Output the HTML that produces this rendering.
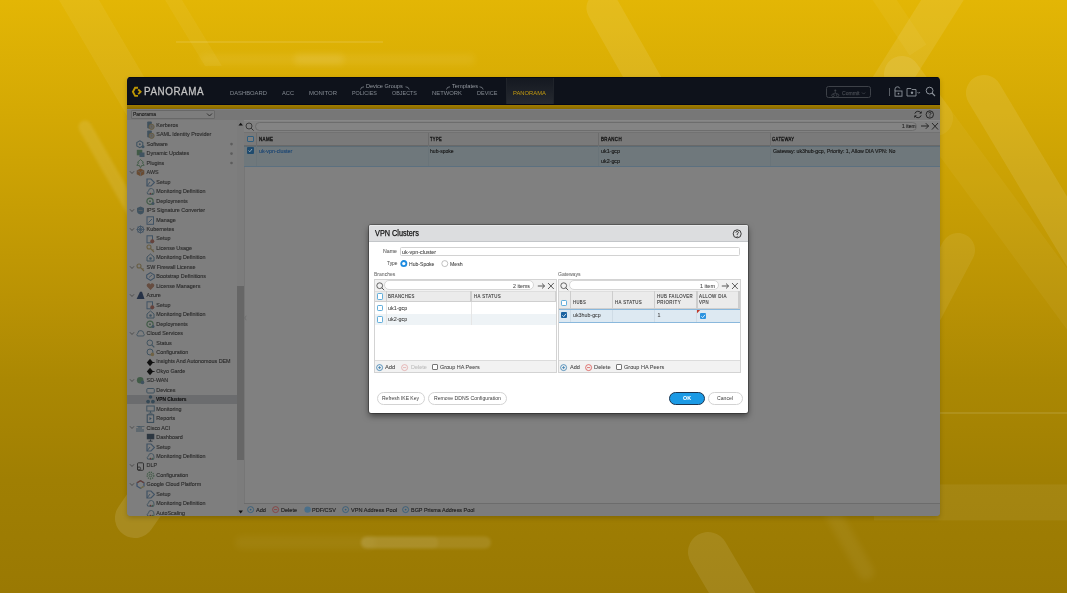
<!DOCTYPE html>
<html><head><meta charset="utf-8"><style>
*{margin:0;padding:0;box-sizing:border-box}
html,body{width:1067px;height:593px;overflow:hidden}
body{position:relative;font-family:"Liberation Sans",sans-serif;background:linear-gradient(180deg,#e3b605 0%,#d4a904 19%,#b99204 51%,#ab8803 64%,#a07f03 81%,#9a7903 100%)}
.a{position:absolute}
.t{position:absolute;white-space:nowrap;line-height:1;-webkit-text-stroke-width:0.15px}
body>div{will-change:transform}
</style></head>
<body>
<svg class="a" style="left:0;top:0" width="1067" height="593" viewBox="0 0 1067 593">
<defs><filter id="bl" x="-50%" y="-50%" width="200%" height="200%"><feGaussianBlur stdDeviation="3"/></filter><filter id="bl2" x="-50%" y="-50%" width="200%" height="200%"><feGaussianBlur stdDeviation="1.5"/></filter></defs>
<polygon points="59,0 99,0 190,155 150,155" fill="#fff" opacity="0.06"/>
<polygon points="165,0 182,0 222,66 205,66" fill="#fff" opacity="0.05"/>
<rect x="176" y="41.5" width="207" height="1" fill="#fff" opacity="0.2"/>
<rect x="200" y="54" width="275" height="11" rx="5" fill="#fff" opacity="0.06" filter="url(#bl)"/>
<rect x="294" y="54" width="50" height="11" rx="5" fill="#fff" opacity="0.09" filter="url(#bl)"/>
<line x1="85" y1="127" x2="145" y2="232" stroke="#fff" stroke-width="13" stroke-linecap="round" opacity="0.1" filter="url(#bl2)"/>
<line x1="603" y1="8" x2="658" y2="105" stroke="#fff" stroke-width="33" stroke-linecap="round" opacity="0.09"/>
<line x1="955" y1="-20" x2="867" y2="120" stroke="#fff" stroke-width="36" stroke-linecap="butt" opacity="0.09"/>
<line x1="902" y1="74" x2="935" y2="118" stroke="#fff" stroke-width="36" stroke-linecap="round" opacity="0.05"/><line x1="902" y1="74" x2="1130" y2="385" stroke="#fff" stroke-width="36" stroke-linecap="round" opacity="0.04"/>
<line x1="878" y1="-10" x2="918" y2="50" stroke="#fff" stroke-width="20" opacity="0.04"/>
<line x1="984" y1="93" x2="1120" y2="320" stroke="#fff" stroke-width="36" stroke-linecap="round" opacity="0.09"/>
<line x1="958" y1="250" x2="900" y2="360" stroke="#fff" stroke-width="34" stroke-linecap="round" opacity="0.07"/>
<rect x="930" y="412.5" width="137" height="1" fill="#fff" opacity="0.2"/>
<rect x="874" y="484.4" width="193" height="36" fill="#fff" opacity="0.06"/>
<line x1="708" y1="552" x2="760" y2="640" stroke="#fff" stroke-width="40" stroke-linecap="round" opacity="0.09"/>
<line x1="828" y1="505" x2="866" y2="572" stroke="#fff" stroke-width="16" stroke-linecap="round" opacity="0.05" filter="url(#bl)"/>
<line x1="135" y1="518" x2="190" y2="438" stroke="#fff" stroke-width="40" stroke-linecap="round" opacity="0.11"/>
<rect x="235" y="536" width="140" height="13" rx="6" fill="#fff" opacity="0.04" filter="url(#bl)"/>
<rect x="361" y="536.5" width="130" height="12" rx="6" fill="#fff" opacity="0.1" filter="url(#bl2)"/>
<rect x="361" y="536.5" width="77" height="12" rx="5" fill="#fff" opacity="0.05" filter="url(#bl2)"/>
</svg>
<div class="a" id="ui" style="left:0;top:0;width:1067px;height:593px">
<div class="a" style="left:127px;top:77px;width:813px;height:439px;border-radius:4px;overflow:hidden;background:#808080;box-shadow:0 2px 5px rgba(0,0,0,0.18)">
<div class="a" style="left:-127px;top:-77px;width:1067px;height:593px">
<div class="a" style="left:127px;top:77px;width:813px;height:28px;background:#0e121b;"></div>
<div class="a" style="left:506px;top:77px;width:48px;height:28px;background:linear-gradient(180deg,#141820 0%,#262a31 100%);border-left:1px solid #1f232a;border-right:1px solid #1f232a"></div>
<div class="a" style="left:127px;top:104px;width:813px;height:1.2px;background:#04061a;"></div>
<div class="a" style="left:127px;top:77px;width:813px;height:1px;background:#080b12;"></div>
<div class="a" style="left:127px;top:105.2px;width:813px;height:3.8px;background:linear-gradient(180deg,#9f7c00,#8a6a00);"></div>
<div class="a" style="left:127px;top:109px;width:813px;height:1px;background:#7a7e88;"></div>
<svg class="a" style="left:131px;top:86px;" width="12" height="12" viewBox="0 0 12 12"><path d="M7 1.7 H4.1 L1.9 5.8 L4.1 9.9 H7" fill="none" stroke="#bd9604" stroke-width="1.9"/><path d="M7.2 3.4 L9.6 5.8 L7.2 8.2" fill="none" stroke="#bd9604" stroke-width="1.9"/></svg>
<div class="t" style="left:144.00px;top:86.12px;font-size:10.6px;color:#c2c2c2;letter-spacing:0.6px;transform:scaleX(0.9307);transform-origin:0 0;-webkit-text-stroke:0.3px #c2c2c2;">PANORAMA</div>
<div class="t" style="left:230.00px;top:89.75px;font-size:6.2px;color:#858b93;transform:scaleX(0.9421);transform-origin:0 0;-webkit-text-stroke-width:0;">DASHBOARD</div>
<div class="t" style="left:282.00px;top:89.75px;font-size:6.2px;color:#858b93;transform:scaleX(0.9167);transform-origin:0 0;-webkit-text-stroke-width:0;">ACC</div>
<div class="t" style="left:309.00px;top:89.75px;font-size:6.2px;color:#858b93;transform:scaleX(0.9601);transform-origin:0 0;-webkit-text-stroke-width:0;">MONITOR</div>
<div class="t" style="left:352.00px;top:89.75px;font-size:6.2px;color:#858b93;transform:scaleX(0.8741);transform-origin:0 0;-webkit-text-stroke-width:0;">POLICIES</div>
<div class="t" style="left:392.00px;top:89.75px;font-size:6.2px;color:#858b93;transform:scaleX(0.8743);transform-origin:0 0;-webkit-text-stroke-width:0;">OBJECTS</div>
<div class="t" style="left:432.00px;top:89.75px;font-size:6.2px;color:#858b93;transform:scaleX(0.9468);transform-origin:0 0;-webkit-text-stroke-width:0;">NETWORK</div>
<div class="t" style="left:477.00px;top:89.75px;font-size:6.2px;color:#858b93;transform:scaleX(0.8881);transform-origin:0 0;-webkit-text-stroke-width:0;">DEVICE</div>
<div class="t" style="left:513.00px;top:89.75px;font-size:6.2px;color:#c39a10;transform:scaleX(0.9422);transform-origin:0 0;-webkit-text-stroke-width:0;">PANORAMA</div>
<div class="t" style="left:366.00px;top:83.22px;font-size:6.0px;color:#959aa1;transform:scaleX(0.9248);transform-origin:0 0;-webkit-text-stroke-width:0;">Device Groups</div>
<div class="t" style="left:451.70px;top:83.22px;font-size:6.0px;color:#959aa1;transform:scaleX(0.9508);transform-origin:0 0;-webkit-text-stroke-width:0;">Templates</div>
<svg class="a" style="left:360px;top:85.5px;" width="5" height="4" viewBox="0 0 5 4"><path d="M0.5 3.5 Q0.8 0.8 4 0.8" fill="none" stroke="#8d939b" stroke-width="0.7"/></svg>
<svg class="a" style="left:405px;top:85.5px;" width="5" height="4" viewBox="0 0 5 4"><path d="M0.5 0.8 Q3.8 0.8 4.2 3.5" fill="none" stroke="#8d939b" stroke-width="0.7"/></svg>
<svg class="a" style="left:446px;top:85.5px;" width="5" height="4" viewBox="0 0 5 4"><path d="M0.5 3.5 Q0.8 0.8 4 0.8" fill="none" stroke="#8d939b" stroke-width="0.7"/></svg>
<svg class="a" style="left:479px;top:85.5px;" width="5" height="4" viewBox="0 0 5 4"><path d="M0.5 0.8 Q3.8 0.8 4.2 3.5" fill="none" stroke="#8d939b" stroke-width="0.7"/></svg>
<div class="a" style="left:826.2px;top:86.2px;width:45px;height:11.8px;border:1.3px solid #3d4148;border-radius:2.5px"></div>
<svg class="a" style="left:831px;top:88.5px;" width="9" height="9" viewBox="0 0 9 9"><circle cx="4.3" cy="1.6" r="1" fill="#41454c"/><circle cx="2" cy="6.3" r="1.3" fill="none" stroke="#41454c" stroke-width="0.8"/><circle cx="6.6" cy="6.3" r="1.3" fill="none" stroke="#41454c" stroke-width="0.8"/><path d="M4.3 2.5 V4.5 M2 5 L4.3 4 L6.6 5" stroke="#41454c" stroke-width="0.7" fill="none"/></svg>
<div class="t" style="left:841.60px;top:89.72px;font-size:6.0px;color:#43474e;transform:scaleX(0.8420);transform-origin:0 0;-webkit-text-stroke-width:0.25px;">Commit</div>
<svg class="a" style="left:860.5px;top:91.1px;" width="6" height="5" viewBox="0 0 6 5"><path d="M1 1.5 L2.6 3.1 L4.2 1.5" stroke="#43474e" stroke-width="0.8" fill="none"/></svg>
<div class="a" style="left:888.5px;top:88px;width:1px;height:8px;background:#5a5f66;"></div>
<svg class="a" style="left:893px;top:86px;" width="10" height="11" viewBox="0 0 10 11"><path d="M2 5 V3 Q2 0.8 4.5 0.8 Q6.5 0.8 6.8 2.5" stroke="#8d939b" stroke-width="0.9" fill="none"/><rect x="2" y="5" width="7" height="5.2" stroke="#8d939b" stroke-width="0.9" fill="none"/><circle cx="5.5" cy="7.6" r="0.9" fill="#8d939b"/></svg>
<svg class="a" style="left:906px;top:86px;" width="15" height="11" viewBox="0 0 15 11"><path d="M1 2.5 H5 L6 3.5 H10 V10 H1 Z" stroke="#8d939b" stroke-width="0.9" fill="none"/><circle cx="6" cy="6.8" r="1.2" fill="#8d939b"/><path d="M11.5 6 L12.8 7.3 L14.1 6" stroke="#8d939b" stroke-width="0.8" fill="none"/></svg>
<svg class="a" style="left:925px;top:86px;" width="11" height="11" viewBox="0 0 11 11"><circle cx="4.6" cy="4.6" r="3.4" stroke="#8d939b" stroke-width="1" fill="none"/><path d="M7 7 L10 10" stroke="#8d939b" stroke-width="1.1"/></svg>
<div class="a" style="left:127px;top:110px;width:813px;height:10px;background:#777777;"></div>
<div class="a" style="left:130.5px;top:109.7px;width:84px;height:9.3px;background:#7d7d7d;border:1px solid #686868;border-radius:1px"></div>
<div class="t" style="left:133.00px;top:111.93px;font-size:5.4px;color:#1c1c1c;transform:scaleX(0.9232);transform-origin:0 0;">Panorama</div>
<svg class="a" style="left:205.5px;top:111.5px;" width="7" height="6" viewBox="0 0 7 6"><path d="M1 1.5 L3.5 4 L6 1.5" stroke="#2a2a2a" stroke-width="0.9" fill="none"/></svg>
<svg class="a" style="left:913px;top:109.5px;" width="10" height="9" viewBox="0 0 10 9"><path d="M1.8 3.6 A3.4 3.4 0 0 1 8 3" stroke="#1e1e1e" stroke-width="0.9" fill="none"/><path d="M8.2 5.4 A3.4 3.4 0 0 1 2 6" stroke="#1e1e1e" stroke-width="0.9" fill="none"/><path d="M6.5 3.2 H8.3 V1.4" stroke="#1e1e1e" stroke-width="0.9" fill="none"/><path d="M3.5 5.8 H1.7 V7.6" stroke="#1e1e1e" stroke-width="0.9" fill="none"/></svg>
<svg class="a" style="left:925px;top:109.5px;" width="10" height="9" viewBox="0 0 10 9"><circle cx="4.8" cy="4.5" r="3.7" stroke="#1e1e1e" stroke-width="0.9" fill="none"/><path d="M3.6 3.3 Q3.8 2.2 4.9 2.2 Q6 2.3 6 3.3 Q5.9 4.1 4.9 4.6 V5.5" stroke="#1e1e1e" stroke-width="0.8" fill="none"/><circle cx="4.9" cy="6.8" r="0.5" fill="#1e1e1e"/></svg>
<div class="a" style="left:127px;top:120px;width:117px;height:396px;background:#7e7e7e;"></div>
<div class="a" style="left:236.5px;top:120px;width:7.5px;height:396px;background:#7c7c7c;"></div>
<div class="a" style="left:236.8px;top:286px;width:7px;height:173.5px;background:#666666;"></div>
<div class="a" style="left:243.8px;top:120px;width:0.6px;height:396px;background:#767676;"></div>
<svg class="a" style="left:237.5px;top:122px;" width="6" height="4" viewBox="0 0 6 4"><path d="M0.5 3.6 L2.7 0.8 L4.9 3.6 Z" fill="#111"/></svg>
<svg class="a" style="left:237.5px;top:510px;" width="6" height="4" viewBox="0 0 6 4"><path d="M0.5 0.6 L2.7 3.4 L4.9 0.6 Z" fill="#111"/></svg>
<div class="a" style="left:127px;top:395.1px;width:109.6px;height:8.8px;background:#6b6c6e;"></div>
<svg class="a" style="left:146px;top:121.0px;filter:saturate(.5) brightness(.8)" width="9" height="9" viewBox="0 0 9 9"><rect x="1.2" y="0.4" width="4.6" height="7" rx="0.8" fill="#3f6888"/><circle cx="5.6" cy="5.8" r="2.6" fill="#7e7e7e" stroke="#8d7434" stroke-width="1"/><path d="M5.6 4.8 V6.6" stroke="#8d7434" stroke-width="0.8"/></svg>
<div class="t" style="left:156.30px;top:122.93px;font-size:5.4px;color:#2b2b2b;-webkit-text-stroke-width:0.12px;">Kerberos</div>
<svg class="a" style="left:146px;top:130.46px;filter:saturate(.5) brightness(.8)" width="9" height="9" viewBox="0 0 9 9"><rect x="1.2" y="0.4" width="4.6" height="7" rx="0.8" fill="#3f6888"/><circle cx="5.6" cy="5.8" r="2.6" fill="#7e7e7e" stroke="#8d7434" stroke-width="1"/><path d="M5.6 4.8 V6.6" stroke="#8d7434" stroke-width="0.8"/></svg>
<div class="t" style="left:156.30px;top:132.39px;font-size:5.4px;color:#2b2b2b;-webkit-text-stroke-width:0.12px;">SAML Identity Provider</div>
<svg class="a" style="left:136px;top:139.92000000000002px;filter:saturate(.5) brightness(.8)" width="9" height="9" viewBox="0 0 9 9"><path d="M3.8 0.8 L6.8 2.5 V6 L3.8 7.7 L0.8 6 V2.5 Z" fill="none" stroke="#3d6b8c" stroke-width="1.1"/><circle cx="3.8" cy="4.2" r="1" fill="#3d6b8c"/><circle cx="7" cy="6.8" r="1.5" fill="#3d6b8c"/></svg>
<div class="t" style="left:146.60px;top:141.85px;font-size:5.4px;color:#2b2b2b;-webkit-text-stroke-width:0.12px;">Software</div>
<svg class="a" style="left:229px;top:142px;" width="5" height="5" viewBox="0 0 5 5"><circle cx="2.5" cy="2.12" r="1.3" fill="#5c5c5c"/></svg>
<svg class="a" style="left:136px;top:149.38000000000002px;filter:saturate(.5) brightness(.8)" width="9" height="9" viewBox="0 0 9 9"><rect x="0.8" y="0.8" width="5.5" height="5.5" fill="#3b7a48"/><rect x="3.5" y="3.5" width="5" height="4.5" fill="#3d6b8c"/></svg>
<div class="t" style="left:146.60px;top:151.31px;font-size:5.4px;color:#2b2b2b;-webkit-text-stroke-width:0.12px;">Dynamic Updates</div>
<svg class="a" style="left:229px;top:152px;" width="5" height="5" viewBox="0 0 5 5"><circle cx="2.5" cy="1.58" r="1.3" fill="#5c5c5c"/></svg>
<svg class="a" style="left:136px;top:158.84000000000003px;filter:saturate(.5) brightness(.8)" width="9" height="9" viewBox="0 0 9 9"><path d="M4.5 0.6 L7.5 3.3 L6.3 3.8 L8.2 6.3 L5.5 6.5 L5 8.3 H4 L3.5 6.5 L0.8 6.3 L2.7 3.8 L1.5 3.3 Z" fill="none" stroke="#3b7a48" stroke-width="0.9"/></svg>
<div class="t" style="left:146.60px;top:160.77px;font-size:5.4px;color:#2b2b2b;-webkit-text-stroke-width:0.12px;">Plugins</div>
<svg class="a" style="left:229px;top:161px;" width="5" height="5" viewBox="0 0 5 5"><circle cx="2.5" cy="2.04" r="1.3" fill="#5c5c5c"/></svg>
<svg class="a" style="left:129px;top:170.0px;" width="6" height="5" viewBox="0 0 6 5"><path d="M1 1.3 L3 3.5 L5 1.3" stroke="#3a3a3a" stroke-width="0.7" fill="none"/></svg>
<svg class="a" style="left:136px;top:168.3px;filter:saturate(.5) brightness(.8)" width="9" height="9" viewBox="0 0 9 9"><path d="M4.5 0.5 L8.3 2.5 V6.3 L4.5 8.3 L0.7 6.3 V2.5 Z" fill="#a2581a"/><path d="M1.5 2.8 L4.5 4.5 L7.5 2.8 M4.5 4.5 V8" stroke="#7b7b7b" stroke-width="0.8" fill="none"/></svg>
<div class="t" style="left:146.60px;top:170.23px;font-size:5.4px;color:#2b2b2b;-webkit-text-stroke-width:0.12px;">AWS</div>
<svg class="a" style="left:146px;top:177.76000000000002px;filter:saturate(.5) brightness(.8)" width="9" height="9" viewBox="0 0 9 9"><path d="M1 1 H5 L8.5 4.5 L5 8 H1 Z" fill="none" stroke="#3d6a95" stroke-width="1.2"/><path d="M1 8 L4 4" stroke="#3d6a95" stroke-width="1"/></svg>
<div class="t" style="left:156.30px;top:179.69px;font-size:5.4px;color:#2b2b2b;-webkit-text-stroke-width:0.12px;">Setup</div>
<svg class="a" style="left:146px;top:187.22000000000003px;filter:saturate(.5) brightness(.8)" width="9" height="9" viewBox="0 0 9 9"><path d="M1.5 7 Q0.5 5 2.5 4 Q2.8 1 5.5 1.5 Q8.3 2 8 5 Q8.5 7 7 7.5 Z" fill="none" stroke="#3d6a8a" stroke-width="0.9"/><circle cx="4.5" cy="6.6" r="0.9" fill="#9a3a3a"/><circle cx="6.6" cy="6.6" r="0.9" fill="#3a7a48"/></svg>
<div class="t" style="left:156.30px;top:189.15px;font-size:5.4px;color:#2b2b2b;-webkit-text-stroke-width:0.12px;">Monitoring Definition</div>
<svg class="a" style="left:146px;top:196.68px;filter:saturate(.5) brightness(.8)" width="9" height="9" viewBox="0 0 9 9"><circle cx="4" cy="4.2" r="3.1" fill="none" stroke="#3a7a48" stroke-width="1.2"/><circle cx="4" cy="4.2" r="1" fill="#3a7a48"/><circle cx="7" cy="6.5" r="1.5" fill="#3d6a8a"/></svg>
<div class="t" style="left:156.30px;top:198.61px;font-size:5.4px;color:#2b2b2b;-webkit-text-stroke-width:0.12px;">Deployments</div>
<svg class="a" style="left:129px;top:207.84000000000003px;" width="6" height="5" viewBox="0 0 6 5"><path d="M1 1.3 L3 3.5 L5 1.3" stroke="#3a3a3a" stroke-width="0.7" fill="none"/></svg>
<svg class="a" style="left:136px;top:206.14000000000004px;filter:saturate(.5) brightness(.8)" width="9" height="9" viewBox="0 0 9 9"><path d="M4.5 0.6 L8 2 V5 Q8 7.6 4.5 8.5 Q1 7.6 1 5 V2 Z" fill="#3d6a8a"/><path d="M2.5 4.5 H6.5" stroke="#7b7b7b" stroke-width="0.8"/></svg>
<div class="t" style="left:146.60px;top:208.07px;font-size:5.4px;color:#2b2b2b;-webkit-text-stroke-width:0.12px;">IPS Signature Converter</div>
<svg class="a" style="left:146px;top:215.60000000000002px;filter:saturate(.5) brightness(.8)" width="9" height="9" viewBox="0 0 9 9"><rect x="1" y="0.8" width="6.5" height="7.5" fill="none" stroke="#3d6a95" stroke-width="1"/><path d="M2.5 6.5 L6 3" stroke="#3d6a95" stroke-width="1"/></svg>
<div class="t" style="left:156.30px;top:217.53px;font-size:5.4px;color:#2b2b2b;-webkit-text-stroke-width:0.12px;">Manage</div>
<svg class="a" style="left:129px;top:226.76px;" width="6" height="5" viewBox="0 0 6 5"><path d="M1 1.3 L3 3.5 L5 1.3" stroke="#3a3a3a" stroke-width="0.7" fill="none"/></svg>
<svg class="a" style="left:136px;top:225.06px;filter:saturate(.5) brightness(.8)" width="9" height="9" viewBox="0 0 9 9"><circle cx="4.5" cy="4.5" r="3.2" fill="none" stroke="#3d6a95" stroke-width="1"/><path d="M4.5 0.5 V8.5 M0.5 4.5 H8.5 M1.7 1.7 L7.3 7.3 M7.3 1.7 L1.7 7.3" stroke="#3d6a95" stroke-width="0.8"/></svg>
<div class="t" style="left:146.60px;top:226.99px;font-size:5.4px;color:#2b2b2b;-webkit-text-stroke-width:0.12px;">Kubernetes</div>
<svg class="a" style="left:146px;top:234.52000000000004px;filter:saturate(.5) brightness(.8)" width="9" height="9" viewBox="0 0 9 9"><rect x="1" y="0.8" width="5.5" height="7" fill="none" stroke="#3d6a95" stroke-width="1"/><circle cx="6.3" cy="6.3" r="2" fill="#a04a3a"/></svg>
<div class="t" style="left:156.30px;top:236.45px;font-size:5.4px;color:#2b2b2b;-webkit-text-stroke-width:0.12px;">Setup</div>
<svg class="a" style="left:146px;top:243.98000000000002px;filter:saturate(.5) brightness(.8)" width="9" height="9" viewBox="0 0 9 9"><circle cx="3" cy="3" r="2" fill="none" stroke="#8d7434" stroke-width="1.1"/><path d="M4.4 4.4 L8 8 M6.5 6.5 L7.5 5.5" stroke="#8d7434" stroke-width="1.1"/></svg>
<div class="t" style="left:156.30px;top:245.91px;font-size:5.4px;color:#2b2b2b;-webkit-text-stroke-width:0.12px;">License Usage</div>
<svg class="a" style="left:146px;top:253.44px;filter:saturate(.5) brightness(.8)" width="9" height="9" viewBox="0 0 9 9"><path d="M1 8 V4 L4.5 1 L8 4 V8 Z" fill="none" stroke="#3d6a8a" stroke-width="1"/><circle cx="4.5" cy="5.5" r="1.3" fill="#3d6a8a"/></svg>
<div class="t" style="left:156.30px;top:255.37px;font-size:5.4px;color:#2b2b2b;-webkit-text-stroke-width:0.12px;">Monitoring Definition</div>
<svg class="a" style="left:129px;top:264.6px;" width="6" height="5" viewBox="0 0 6 5"><path d="M1 1.3 L3 3.5 L5 1.3" stroke="#3a3a3a" stroke-width="0.7" fill="none"/></svg>
<svg class="a" style="left:136px;top:262.90000000000003px;filter:saturate(.5) brightness(.8)" width="9" height="9" viewBox="0 0 9 9"><circle cx="3" cy="3" r="2" fill="none" stroke="#8d7434" stroke-width="1.1"/><path d="M4.4 4.4 L8 8 M6.5 6.5 L7.5 5.5" stroke="#8d7434" stroke-width="1.1"/></svg>
<div class="t" style="left:146.60px;top:264.83px;font-size:5.4px;color:#2b2b2b;-webkit-text-stroke-width:0.12px;">SW Firewall License</div>
<svg class="a" style="left:146px;top:272.36px;filter:saturate(.5) brightness(.8)" width="9" height="9" viewBox="0 0 9 9"><path d="M4.5 0.6 L8.3 3 V6 L4.5 8.4 L0.7 6 V3 Z" fill="none" stroke="#3d6a95" stroke-width="1.1"/><path d="M3 5.5 L6 3" stroke="#3d6a95" stroke-width="0.9"/></svg>
<div class="t" style="left:156.30px;top:274.29px;font-size:5.4px;color:#2b2b2b;-webkit-text-stroke-width:0.12px;">Bootstrap Definitions</div>
<svg class="a" style="left:146px;top:281.82000000000005px;filter:saturate(.5) brightness(.8)" width="9" height="9" viewBox="0 0 9 9"><path d="M4.5 8 L1 4.5 Q0 2.5 2 1.5 Q3.7 0.9 4.5 2.5 Q5.3 0.9 7 1.5 Q9 2.5 8 4.5 Z" fill="#9a5a3a"/></svg>
<div class="t" style="left:156.30px;top:283.75px;font-size:5.4px;color:#2b2b2b;-webkit-text-stroke-width:0.12px;">License Managers</div>
<svg class="a" style="left:129px;top:292.98px;" width="6" height="5" viewBox="0 0 6 5"><path d="M1 1.3 L3 3.5 L5 1.3" stroke="#3a3a3a" stroke-width="0.7" fill="none"/></svg>
<svg class="a" style="left:136px;top:291.28000000000003px;filter:saturate(.5) brightness(.8)" width="9" height="9" viewBox="0 0 9 9"><path d="M0.6 8 L4 0.8 H6 L8.5 8 Z" fill="#203f72"/></svg>
<div class="t" style="left:146.60px;top:293.21px;font-size:5.4px;color:#2b2b2b;-webkit-text-stroke-width:0.12px;">Azure</div>
<svg class="a" style="left:146px;top:300.74px;filter:saturate(.5) brightness(.8)" width="9" height="9" viewBox="0 0 9 9"><rect x="1" y="0.8" width="5.5" height="7" fill="none" stroke="#3d6a95" stroke-width="1"/><circle cx="6.3" cy="6.3" r="2" fill="#a04a3a"/></svg>
<div class="t" style="left:156.30px;top:302.67px;font-size:5.4px;color:#2b2b2b;-webkit-text-stroke-width:0.12px;">Setup</div>
<svg class="a" style="left:146px;top:310.20000000000005px;filter:saturate(.5) brightness(.8)" width="9" height="9" viewBox="0 0 9 9"><path d="M1 8 V4 L4.5 1 L8 4 V8 Z" fill="none" stroke="#3d6a8a" stroke-width="1"/><circle cx="4.5" cy="5.5" r="1.3" fill="#3d6a8a"/></svg>
<div class="t" style="left:156.30px;top:312.13px;font-size:5.4px;color:#2b2b2b;-webkit-text-stroke-width:0.12px;">Monitoring Definition</div>
<svg class="a" style="left:146px;top:319.66px;filter:saturate(.5) brightness(.8)" width="9" height="9" viewBox="0 0 9 9"><circle cx="4" cy="4.2" r="3.1" fill="none" stroke="#3a7a48" stroke-width="1.2"/><circle cx="4" cy="4.2" r="1" fill="#3a7a48"/><circle cx="7" cy="6.5" r="1.5" fill="#3d6a8a"/></svg>
<div class="t" style="left:156.30px;top:321.59px;font-size:5.4px;color:#2b2b2b;-webkit-text-stroke-width:0.12px;">Deployments</div>
<svg class="a" style="left:129px;top:330.82px;" width="6" height="5" viewBox="0 0 6 5"><path d="M1 1.3 L3 3.5 L5 1.3" stroke="#3a3a3a" stroke-width="0.7" fill="none"/></svg>
<svg class="a" style="left:136px;top:329.12px;filter:saturate(.5) brightness(.8)" width="9" height="9" viewBox="0 0 9 9"><path d="M1.5 7 Q0 5.5 1.8 4.2 Q2 1.2 5 1.6 Q7.8 2 7.6 4.5 Q9 5.5 7.6 7 Z" fill="none" stroke="#3d6a8a" stroke-width="0.9"/></svg>
<div class="t" style="left:146.60px;top:331.05px;font-size:5.4px;color:#2b2b2b;-webkit-text-stroke-width:0.12px;">Cloud Services</div>
<svg class="a" style="left:146px;top:338.58000000000004px;filter:saturate(.5) brightness(.8)" width="9" height="9" viewBox="0 0 9 9"><circle cx="3.8" cy="3.8" r="2.8" fill="none" stroke="#3d6a8a" stroke-width="1"/><path d="M5.8 5.8 L8.3 8.3" stroke="#3d6a8a" stroke-width="1.2"/></svg>
<div class="t" style="left:156.30px;top:340.51px;font-size:5.4px;color:#2b2b2b;-webkit-text-stroke-width:0.12px;">Status</div>
<svg class="a" style="left:146px;top:348.04px;filter:saturate(.5) brightness(.8)" width="9" height="9" viewBox="0 0 9 9"><circle cx="4" cy="4" r="3" fill="none" stroke="#3d6a8a" stroke-width="1"/><circle cx="6.4" cy="6.4" r="1.8" fill="#9a7a30"/></svg>
<div class="t" style="left:156.30px;top:349.97px;font-size:5.4px;color:#2b2b2b;-webkit-text-stroke-width:0.12px;">Configuration</div>
<svg class="a" style="left:146px;top:357.50000000000006px;filter:saturate(.5) brightness(.8)" width="9" height="9" viewBox="0 0 9 9"><path d="M4 0.8 L7.2 4.5 L4 8.2 L0.8 4.5 Z" fill="#151515"/><path d="M5.5 4.5 H8.6" stroke="#151515" stroke-width="0.9"/></svg>
<div class="t" style="left:156.30px;top:359.43px;font-size:5.4px;color:#2b2b2b;-webkit-text-stroke-width:0.12px;">Insights And Autonomous DEM</div>
<svg class="a" style="left:146px;top:366.96000000000004px;filter:saturate(.5) brightness(.8)" width="9" height="9" viewBox="0 0 9 9"><path d="M4 0.8 L7.2 4.5 L4 8.2 L0.8 4.5 Z" fill="#151515"/><path d="M5.5 4.5 H8.6" stroke="#151515" stroke-width="0.9"/></svg>
<div class="t" style="left:156.30px;top:368.89px;font-size:5.4px;color:#2b2b2b;-webkit-text-stroke-width:0.12px;">Okyo Garde</div>
<svg class="a" style="left:129px;top:378.12px;" width="6" height="5" viewBox="0 0 6 5"><path d="M1 1.3 L3 3.5 L5 1.3" stroke="#3a3a3a" stroke-width="0.7" fill="none"/></svg>
<svg class="a" style="left:136px;top:376.42px;filter:saturate(.5) brightness(.8)" width="9" height="9" viewBox="0 0 9 9"><circle cx="4.2" cy="4.2" r="3.3" fill="#3a7a48"/><circle cx="6.5" cy="6.4" r="1.8" fill="#3d6a8a"/></svg>
<div class="t" style="left:146.60px;top:378.35px;font-size:5.4px;color:#2b2b2b;-webkit-text-stroke-width:0.12px;">SD-WAN</div>
<svg class="a" style="left:146px;top:385.88px;filter:saturate(.5) brightness(.8)" width="9" height="9" viewBox="0 0 9 9"><rect x="0.8" y="2.5" width="7.5" height="4.5" rx="1" fill="none" stroke="#3d6a8a" stroke-width="1"/></svg>
<div class="t" style="left:156.30px;top:387.81px;font-size:5.4px;color:#2b2b2b;-webkit-text-stroke-width:0.12px;">Devices</div>
<svg class="a" style="left:146px;top:395.34000000000003px;filter:saturate(.5) brightness(.8)" width="9" height="9" viewBox="0 0 9 9"><circle cx="4.5" cy="2" r="1.8" fill="#2f5f7f"/><circle cx="2.1" cy="6.6" r="1.9" fill="#2f5f7f"/><circle cx="6.9" cy="6.6" r="1.9" fill="#2f5f7f"/></svg>
<div class="t" style="left:156.30px;top:397.27px;font-size:5.4px;color:#111;font-weight:bold;transform:scaleX(0.8944);transform-origin:0 0;-webkit-text-stroke-width:0.12px;">VPN Clusters</div>
<svg class="a" style="left:146px;top:404.8px;filter:saturate(.5) brightness(.8)" width="9" height="9" viewBox="0 0 9 9"><rect x="0.8" y="1" width="7.5" height="5" fill="none" stroke="#3d6a8a" stroke-width="1"/><path d="M4.5 6 V8 M2.5 8.2 H6.5" stroke="#3d6a8a" stroke-width="0.9"/></svg>
<div class="t" style="left:156.30px;top:406.73px;font-size:5.4px;color:#2b2b2b;-webkit-text-stroke-width:0.12px;">Monitoring</div>
<svg class="a" style="left:146px;top:414.26000000000005px;filter:saturate(.5) brightness(.8)" width="9" height="9" viewBox="0 0 9 9"><rect x="1.2" y="0.8" width="6.5" height="7.6" fill="none" stroke="#2f5f85" stroke-width="1"/><path d="M3.5 3 L5.8 4.6 L3.5 6.2 Z" fill="#2f5f85"/></svg>
<div class="t" style="left:156.30px;top:416.19px;font-size:5.4px;color:#2b2b2b;-webkit-text-stroke-width:0.12px;">Reports</div>
<svg class="a" style="left:129px;top:425.42px;" width="6" height="5" viewBox="0 0 6 5"><path d="M1 1.3 L3 3.5 L5 1.3" stroke="#3a3a3a" stroke-width="0.7" fill="none"/></svg>
<svg class="a" style="left:136px;top:423.72px;filter:saturate(.5) brightness(.8)" width="9" height="9" viewBox="0 0 9 9"><path d="M1 8 V4 M3 8 V2 M5 8 V3 M7 8 V5" stroke="#3d6a8a" stroke-width="1"/><path d="M0.5 2.5 H8.5" stroke="#3d6a8a" stroke-width="0.7"/></svg>
<div class="t" style="left:146.60px;top:425.65px;font-size:5.4px;color:#2b2b2b;-webkit-text-stroke-width:0.12px;">Cisco ACI</div>
<svg class="a" style="left:146px;top:433.18px;filter:saturate(.5) brightness(.8)" width="9" height="9" viewBox="0 0 9 9"><rect x="0.8" y="0.8" width="7.5" height="5.5" fill="#2e4660"/><path d="M4.5 6.5 V8 M2.5 8.2 H6.5" stroke="#2e4660" stroke-width="0.9"/></svg>
<div class="t" style="left:156.30px;top:435.11px;font-size:5.4px;color:#2b2b2b;-webkit-text-stroke-width:0.12px;">Dashboard</div>
<svg class="a" style="left:146px;top:442.64000000000004px;filter:saturate(.5) brightness(.8)" width="9" height="9" viewBox="0 0 9 9"><path d="M1 1 H5 L8.5 4.5 L5 8 H1 Z" fill="none" stroke="#3d6a95" stroke-width="1.2"/><path d="M1 8 L4 4" stroke="#3d6a95" stroke-width="1"/></svg>
<div class="t" style="left:156.30px;top:444.57px;font-size:5.4px;color:#2b2b2b;-webkit-text-stroke-width:0.12px;">Setup</div>
<svg class="a" style="left:146px;top:452.1px;filter:saturate(.5) brightness(.8)" width="9" height="9" viewBox="0 0 9 9"><path d="M1.5 7 Q0.5 5 2.5 4 Q2.8 1 5.5 1.5 Q8.3 2 8 5 Q8.5 7 7 7.5 Z" fill="none" stroke="#3d6a8a" stroke-width="0.9"/><circle cx="4.5" cy="6.6" r="0.9" fill="#9a3a3a"/><circle cx="6.6" cy="6.6" r="0.9" fill="#3a7a48"/></svg>
<div class="t" style="left:156.30px;top:454.03px;font-size:5.4px;color:#2b2b2b;-webkit-text-stroke-width:0.12px;">Monitoring Definition</div>
<svg class="a" style="left:129px;top:463.26000000000005px;" width="6" height="5" viewBox="0 0 6 5"><path d="M1 1.3 L3 3.5 L5 1.3" stroke="#3a3a3a" stroke-width="0.7" fill="none"/></svg>
<svg class="a" style="left:136px;top:461.56000000000006px;filter:saturate(.5) brightness(.8)" width="9" height="9" viewBox="0 0 9 9"><rect x="1.5" y="0.8" width="6" height="7.5" rx="1" fill="none" stroke="#333" stroke-width="0.9"/><circle cx="3" cy="6.5" r="1.6" fill="none" stroke="#333" stroke-width="0.8"/></svg>
<div class="t" style="left:146.60px;top:463.49px;font-size:5.4px;color:#2b2b2b;-webkit-text-stroke-width:0.12px;">DLP</div>
<svg class="a" style="left:146px;top:471.02000000000004px;filter:saturate(.5) brightness(.8)" width="9" height="9" viewBox="0 0 9 9"><circle cx="4.5" cy="4.5" r="3.3" fill="none" stroke="#3a7a48" stroke-width="1.3" stroke-dasharray="1.3 0.9"/><circle cx="4.5" cy="4.5" r="1.4" fill="none" stroke="#3a7a48" stroke-width="0.9"/></svg>
<div class="t" style="left:156.30px;top:472.95px;font-size:5.4px;color:#2b2b2b;-webkit-text-stroke-width:0.12px;">Configuration</div>
<svg class="a" style="left:129px;top:482.18px;" width="6" height="5" viewBox="0 0 6 5"><path d="M1 1.3 L3 3.5 L5 1.3" stroke="#3a3a3a" stroke-width="0.7" fill="none"/></svg>
<svg class="a" style="left:136px;top:480.48px;filter:saturate(.5) brightness(.8)" width="9" height="9" viewBox="0 0 9 9"><path d="M4.5 0.8 L8 2.8 V6.2 L4.5 8.2 L1 6.2 V2.8 Z" fill="none" stroke="#3d6aa5" stroke-width="1.3"/><path d="M1 2.8 L4.5 0.8 L8 2.8" stroke="#a84436" stroke-width="1.3" fill="none"/><path d="M8 6.2 L4.5 8.2" stroke="#a08a30" stroke-width="1.3"/></svg>
<div class="t" style="left:146.60px;top:482.41px;font-size:5.4px;color:#2b2b2b;-webkit-text-stroke-width:0.12px;">Google Cloud Platform</div>
<svg class="a" style="left:146px;top:489.94000000000005px;filter:saturate(.5) brightness(.8)" width="9" height="9" viewBox="0 0 9 9"><path d="M1 1 H5 L8.5 4.5 L5 8 H1 Z" fill="none" stroke="#3d6a95" stroke-width="1.2"/><path d="M1 8 L4 4" stroke="#3d6a95" stroke-width="1"/></svg>
<div class="t" style="left:156.30px;top:491.87px;font-size:5.4px;color:#2b2b2b;-webkit-text-stroke-width:0.12px;">Setup</div>
<svg class="a" style="left:146px;top:499.40000000000003px;filter:saturate(.5) brightness(.8)" width="9" height="9" viewBox="0 0 9 9"><path d="M1.5 7 Q0.5 5 2.5 4 Q2.8 1 5.5 1.5 Q8.3 2 8 5 Q8.5 7 7 7.5 Z" fill="none" stroke="#3d6a8a" stroke-width="0.9"/><circle cx="4.5" cy="6.6" r="0.9" fill="#9a3a3a"/><circle cx="6.6" cy="6.6" r="0.9" fill="#3a7a48"/></svg>
<div class="t" style="left:156.30px;top:501.33px;font-size:5.4px;color:#2b2b2b;-webkit-text-stroke-width:0.12px;">Monitoring Definition</div>
<svg class="a" style="left:146px;top:508.86000000000007px;filter:saturate(.5) brightness(.8)" width="9" height="9" viewBox="0 0 9 9"><path d="M1.5 7 Q0.5 5 2.5 4 Q2.8 1 5.5 1.5 Q8.3 2 8 5 Q8.5 7 7 7.5 Z" fill="none" stroke="#3d6a8a" stroke-width="0.9"/><circle cx="4.5" cy="6.6" r="0.9" fill="#9a3a3a"/><circle cx="6.6" cy="6.6" r="0.9" fill="#3a7a48"/></svg>
<div class="t" style="left:156.30px;top:510.79px;font-size:5.4px;color:#2b2b2b;-webkit-text-stroke-width:0.12px;">AutoScaling</div>
<svg class="a" style="left:244px;top:315px;" width="3" height="6" viewBox="0 0 3 6"><path d="M2.2 0.8 L0.8 3 L2.2 5.2" stroke="#666" stroke-width="0.6" fill="none"/></svg>
<div class="a" style="left:244px;top:120px;width:696px;height:13px;background:#818181;border-top:1px solid #888;border-bottom:1px solid #727272"></div>
<svg class="a" style="left:245px;top:121.5px;" width="10" height="10" viewBox="0 0 10 10"><circle cx="4" cy="4" r="3" stroke="#2a2a2a" stroke-width="0.8" fill="none"/><path d="M6.2 6.2 L8.6 8.6" stroke="#2a2a2a" stroke-width="0.9"/></svg>
<div class="a" style="left:255px;top:121.5px;width:662px;height:9.5px;border:1px solid #6d6d6d;border-radius:5px;background:#848484"></div>
<div class="t" style="left:902.00px;top:123.93px;font-size:5.4px;color:#262626;transform:scaleX(0.9249);transform-origin:0 0;">1 item</div>
<svg class="a" style="left:920px;top:122px;" width="10" height="8" viewBox="0 0 10 8"><path d="M1 4 H8.5 M5.8 1.2 L8.6 4 L5.8 6.8" stroke="#1e1e1e" stroke-width="0.9" fill="none"/></svg>
<svg class="a" style="left:931px;top:121.5px;" width="8" height="9" viewBox="0 0 8 9"><path d="M1 1 L7 7.5 M7 1 L1 7.5" stroke="#1e1e1e" stroke-width="0.9" fill="none"/></svg>
<div class="a" style="left:244px;top:133px;width:696px;height:12.5px;background:#7a7a7a;border-bottom:1px solid #696969"></div>
<div class="a" style="left:256px;top:133px;width:1px;height:12.5px;background:#6c6c6c;"></div>
<div class="a" style="left:427.8px;top:133px;width:1px;height:12.5px;background:#6c6c6c;"></div>
<div class="a" style="left:598.4px;top:133px;width:1px;height:12.5px;background:#6c6c6c;"></div>
<div class="a" style="left:770px;top:133px;width:1px;height:12.5px;background:#6c6c6c;"></div>
<div class="a" style="left:247.4px;top:135.5px;width:6.2px;height:6.5px;border:1px solid #2f5f80;border-radius:1px;background:#808080"></div>
<div class="t" style="left:259.00px;top:136.96px;font-size:5.0px;color:#141414;letter-spacing:0.45px;transform:scaleX(0.8864);transform-origin:0 0;-webkit-text-stroke-width:0.3px;">NAME</div>
<div class="t" style="left:430.30px;top:136.96px;font-size:5.0px;color:#141414;letter-spacing:0.45px;transform:scaleX(0.8076);transform-origin:0 0;-webkit-text-stroke-width:0.3px;">TYPE</div>
<div class="t" style="left:601.00px;top:136.96px;font-size:5.0px;color:#141414;letter-spacing:0.45px;transform:scaleX(0.8819);transform-origin:0 0;-webkit-text-stroke-width:0.3px;">BRANCH</div>
<div class="t" style="left:772.00px;top:136.96px;font-size:5.0px;color:#141414;letter-spacing:0.45px;transform:scaleX(0.8265);transform-origin:0 0;-webkit-text-stroke-width:0.3px;">GATEWAY</div>
<div class="a" style="left:244px;top:145.5px;width:696px;height:21px;background:#6f787c;border-bottom:1px solid #5b7080;border-top:1px solid #5c6b74"></div>
<div class="a" style="left:256px;top:145.5px;width:1px;height:20.5px;background:#6a7479;"></div>
<div class="a" style="left:427.8px;top:145.5px;width:1px;height:20.5px;background:#6a7479;"></div>
<div class="a" style="left:598.4px;top:145.5px;width:1px;height:20.5px;background:#6a7479;"></div>
<div class="a" style="left:770px;top:145.5px;width:1px;height:20.5px;background:#6a7479;"></div>
<div class="a" style="left:247.4px;top:147px;width:6.2px;height:6.5px;border-radius:1px;background:#1f4b6e"></div>
<svg class="a" style="left:247.4px;top:147px;" width="7" height="7" viewBox="0 0 7 7"><path d="M1.5 3.5 L2.8 4.8 L5 2" stroke="#aab8c2" stroke-width="0.8" fill="none"/></svg>
<div class="t" style="left:259.00px;top:148.81px;font-size:5.3px;color:#1d4774;transform:scaleX(1.0005);transform-origin:0 0;">uk-vpn-cluster</div>
<div class="t" style="left:430.30px;top:148.81px;font-size:5.3px;color:#1a1a1a;transform:scaleX(0.9575);transform-origin:0 0;">hub-spoke</div>
<div class="t" style="left:601.00px;top:148.81px;font-size:5.3px;color:#1a1a1a;transform:scaleX(1.0077);transform-origin:0 0;">uk1-gcp</div>
<div class="t" style="left:601.00px;top:159.01px;font-size:5.3px;color:#1a1a1a;transform:scaleX(1.0077);transform-origin:0 0;">uk2-gcp</div>
<div class="t" style="left:772.50px;top:148.81px;font-size:5.3px;color:#1a1a1a;transform:scaleX(0.9854);transform-origin:0 0;">Gateway: uk3hub-gcp, Priority: 1, Allow DIA VPN: No</div>
<div class="a" style="left:244px;top:502.6px;width:696px;height:13.4px;background:#7c7c7c;border-top:1px solid #6c6c6c"></div>
<svg class="a" style="left:247.3px;top:506.4px;" width="8" height="8" viewBox="0 0 8 8"><circle cx="3.6" cy="3.6" r="3" stroke="#2f5c7a" stroke-width="0.8" fill="none"/><circle cx="3.6" cy="3.6" r="0.9" fill="#2f5c7a"/></svg>
<div class="t" style="left:256.30px;top:507.54px;font-size:5.5px;color:#222;transform:scaleX(1.0218);transform-origin:0 0;">Add</div>
<svg class="a" style="left:272.3px;top:506.4px;" width="8" height="8" viewBox="0 0 8 8"><circle cx="3.6" cy="3.6" r="3" stroke="#8a3a3a" stroke-width="0.8" fill="none"/><path d="M2 3.6 H5.2" stroke="#8a3a3a" stroke-width="0.8"/></svg>
<div class="t" style="left:281.20px;top:507.54px;font-size:5.5px;color:#222;transform:scaleX(1.0064);transform-origin:0 0;">Delete</div>
<svg class="a" style="left:303.5px;top:506.4px;" width="8" height="8" viewBox="0 0 8 8"><circle cx="3.6" cy="3.6" r="3.2" fill="#4a6f8a"/></svg>
<div class="t" style="left:312.20px;top:507.54px;font-size:5.5px;color:#222;transform:scaleX(1.0068);transform-origin:0 0;">PDF/CSV</div>
<svg class="a" style="left:342.4px;top:506.4px;" width="8" height="8" viewBox="0 0 8 8"><circle cx="3.6" cy="3.6" r="3" stroke="#2f5c7a" stroke-width="0.8" fill="none"/><circle cx="3.6" cy="3.6" r="0.9" fill="#2f5c7a"/></svg>
<div class="t" style="left:350.80px;top:507.54px;font-size:5.5px;color:#222;transform:scaleX(1.0167);transform-origin:0 0;">VPN Address Pool</div>
<svg class="a" style="left:402.2px;top:506.4px;" width="8" height="8" viewBox="0 0 8 8"><circle cx="3.6" cy="3.6" r="3" stroke="#2f5c7a" stroke-width="0.8" fill="none"/><circle cx="3.6" cy="3.6" r="0.9" fill="#2f5c7a"/></svg>
<div class="t" style="left:410.60px;top:507.54px;font-size:5.5px;color:#222;transform:scaleX(0.9907);transform-origin:0 0;">BGP Prisma Address Pool</div>
</div></div>
<div class="a" style="left:368.6px;top:225px;width:379.1px;height:187.8px;background:#fff;border-radius:2px;box-shadow:0 0 0 0.8px rgba(0,0,0,0.35),0 3px 6px rgba(0,0,0,0.5)"></div>
<div class="a" style="left:368.6px;top:225px;width:379.1px;height:17.4px;background:#dcdddf;border-top:1px solid #e9eaeb;border-bottom:1px solid #c3c6c9;border-radius:2px 2px 0 0"></div>
<div class="t" style="left:374.70px;top:228.83px;font-size:8.7px;color:#111;transform:scaleX(0.8427);transform-origin:0 0;-webkit-text-stroke-width:0.05px;-webkit-text-stroke:0.25px #111;">VPN Clusters</div>
<svg class="a" style="left:732px;top:228.5px;" width="11" height="10" viewBox="0 0 11 10"><circle cx="5.2" cy="4.8" r="4" stroke="#2a2a2a" stroke-width="0.9" fill="none"/><path d="M3.9 3.6 Q4.1 2.4 5.2 2.4 Q6.4 2.5 6.4 3.6 Q6.3 4.4 5.2 5 V5.9" stroke="#2a2a2a" stroke-width="0.9" fill="none"/><circle cx="5.2" cy="7.2" r="0.55" fill="#2a2a2a"/></svg>
<div class="t" style="left:383.00px;top:248.71px;font-size:5.3px;color:#555;transform:scaleX(0.9903);transform-origin:0 0;-webkit-text-stroke-width:0.05px;">Name</div>
<div class="a" style="left:399.5px;top:246.8px;width:340.8px;height:9.7px;border:1px solid #d2d2d2;border-radius:1.5px;background:#fff"></div>
<div class="t" style="left:401.50px;top:249.51px;font-size:5.3px;color:#3a3a3a;transform:scaleX(1.0215);transform-origin:0 0;-webkit-text-stroke-width:0.05px;">uk-vpn-cluster</div>
<div class="t" style="left:386.50px;top:260.51px;font-size:5.3px;color:#555;transform:scaleX(0.9138);transform-origin:0 0;-webkit-text-stroke-width:0.05px;">Type</div>
<svg class="a" style="left:400px;top:260px;" width="8" height="8" viewBox="0 0 8 8"><circle cx="3.8" cy="3.6" r="2.6" stroke="#1d8be0" stroke-width="1.8" fill="#fff"/></svg>
<div class="t" style="left:409.00px;top:261.51px;font-size:5.3px;color:#3a3a3a;transform:scaleX(0.9579);transform-origin:0 0;-webkit-text-stroke-width:0.05px;">Hub-Spoke</div>
<svg class="a" style="left:440.5px;top:260px;" width="8" height="8" viewBox="0 0 8 8"><circle cx="3.8" cy="3.6" r="3" stroke="#a8a8a8" stroke-width="0.7" fill="#fff"/></svg>
<div class="t" style="left:450.00px;top:261.51px;font-size:5.3px;color:#3a3a3a;transform:scaleX(0.9799);transform-origin:0 0;-webkit-text-stroke-width:0.05px;">Mesh</div>
<div class="t" style="left:373.70px;top:272.11px;font-size:5.3px;color:#6a6a6a;transform:scaleX(0.9513);transform-origin:0 0;-webkit-text-stroke-width:0.05px;">Branches</div>
<div class="t" style="left:557.90px;top:272.11px;font-size:5.3px;color:#6a6a6a;transform:scaleX(0.9548);transform-origin:0 0;-webkit-text-stroke-width:0.05px;">Gateways</div>
<div class="a" style="left:374.1px;top:279.1px;width:182.10000000000002px;height:12.2px;background:#f1f1f1;"></div>
<svg class="a" style="left:375.6px;top:281.5px;" width="9" height="9" viewBox="0 0 9 9"><circle cx="3.7" cy="3.7" r="2.9" stroke="#444" stroke-width="0.8" fill="none"/><path d="M5.8 5.8 L8.2 8.2" stroke="#444" stroke-width="0.9"/></svg>
<div class="a" style="left:384px;top:280.4px;width:150.20000000000005px;height:9.8px;border:1px solid #d6d6d6;border-radius:5px;background:#fff"></div>
<div class="t" style="left:513.30px;top:283.71px;font-size:5.3px;color:#444;transform:scaleX(0.9952);transform-origin:0 0;-webkit-text-stroke-width:0.05px;">2 items</div>
<svg class="a" style="left:536.7px;top:282px;" width="9" height="8" viewBox="0 0 9 8"><path d="M0.8 4 H7.5 M5 1.5 L7.6 4 L5 6.5" stroke="#333" stroke-width="0.8" fill="none"/></svg>
<svg class="a" style="left:546.7px;top:281.6px;" width="8" height="8" viewBox="0 0 8 8"><path d="M1 1 L6.8 7 M6.8 1 L1 7" stroke="#333" stroke-width="0.8" fill="none"/></svg>
<div class="a" style="left:558px;top:279.1px;width:182.29999999999995px;height:12.2px;background:#f1f1f1;"></div>
<svg class="a" style="left:559.5px;top:281.5px;" width="9" height="9" viewBox="0 0 9 9"><circle cx="3.7" cy="3.7" r="2.9" stroke="#444" stroke-width="0.8" fill="none"/><path d="M5.8 5.8 L8.2 8.2" stroke="#444" stroke-width="0.9"/></svg>
<div class="a" style="left:568.5px;top:280.4px;width:150.20000000000005px;height:9.8px;border:1px solid #d6d6d6;border-radius:5px;background:#fff"></div>
<div class="t" style="left:699.80px;top:283.71px;font-size:5.3px;color:#444;transform:scaleX(1.0393);transform-origin:0 0;-webkit-text-stroke-width:0.05px;">1 item</div>
<svg class="a" style="left:721.2px;top:282px;" width="9" height="8" viewBox="0 0 9 8"><path d="M0.8 4 H7.5 M5 1.5 L7.6 4 L5 6.5" stroke="#333" stroke-width="0.8" fill="none"/></svg>
<svg class="a" style="left:731.2px;top:281.6px;" width="8" height="8" viewBox="0 0 8 8"><path d="M1 1 L6.8 7 M6.8 1 L1 7" stroke="#333" stroke-width="0.8" fill="none"/></svg>
<div class="a" style="left:374.1px;top:291.3px;width:182.1px;height:11.1px;background:#ebebeb;border-top:1px solid #dedede;border-bottom:1px solid #cfcfcf"></div>
<div class="a" style="left:385.6px;top:291.3px;width:1.8px;height:11.1px;background:#cdcdcd;"></div>
<div class="a" style="left:470.1px;top:291.3px;width:1.6px;height:11.1px;background:#cdcdcd;"></div>
<div class="a" style="left:555.2px;top:291.3px;width:1px;height:11.1px;background:#d2d2d2;"></div>
<div class="a" style="left:376.6px;top:293.2px;width:6.4px;height:6.4px;border:1.2px solid #62aedb;border-radius:1.2px;background:#fff"></div>
<div class="t" style="left:388.30px;top:295.00px;font-size:4.6px;color:#3a3a3a;letter-spacing:0.4px;transform:scaleX(0.9283);transform-origin:0 0;-webkit-text-stroke-width:0.05px;-webkit-text-stroke-width:0.12px;">BRANCHES</div>
<div class="t" style="left:473.50px;top:295.00px;font-size:4.6px;color:#3a3a3a;letter-spacing:0.4px;transform:scaleX(0.9481);transform-origin:0 0;-webkit-text-stroke-width:0.05px;-webkit-text-stroke-width:0.12px;">HA STATUS</div>
<div class="a" style="left:374.1px;top:302.4px;width:182.1px;height:11.1px;background:#fff;"></div>
<div class="a" style="left:374.1px;top:313.5px;width:182.1px;height:11.2px;background:#eef3f6;"></div>
<div class="a" style="left:386px;top:302.4px;width:1px;height:22.3px;background:#e6e6e6;"></div>
<div class="a" style="left:470.5px;top:302.4px;width:1px;height:22.3px;background:#e6e6e6;"></div>
<div class="a" style="left:376.6px;top:305.1px;width:6.4px;height:6.4px;border:1.2px solid #62aedb;border-radius:1.2px;background:#fff"></div>
<div class="t" style="left:388.30px;top:306.11px;font-size:5.3px;color:#3a3a3a;transform:scaleX(1.0183);transform-origin:0 0;-webkit-text-stroke-width:0.05px;">uk1-gcp</div>
<div class="a" style="left:376.6px;top:316.2px;width:6.4px;height:6.4px;border:1.2px solid #62aedb;border-radius:1.2px;background:#fff"></div>
<div class="t" style="left:388.30px;top:317.21px;font-size:5.3px;color:#3a3a3a;transform:scaleX(1.0183);transform-origin:0 0;-webkit-text-stroke-width:0.05px;">uk2-gcp</div>
<div class="a" style="left:558px;top:291.3px;width:182.3px;height:18px;background:#ebebeb;border-top:1px solid #dedede;border-bottom:1px solid #cfcfcf"></div>
<div class="a" style="left:569.6px;top:291.3px;width:1.8px;height:18px;background:#cdcdcd;"></div>
<div class="a" style="left:611.8px;top:291.3px;width:1.6px;height:18px;background:#cdcdcd;"></div>
<div class="a" style="left:653.8px;top:291.3px;width:1.6px;height:18px;background:#cdcdcd;"></div>
<div class="a" style="left:696.1px;top:291.3px;width:1.6px;height:18px;background:#cdcdcd;"></div>
<div class="a" style="left:738px;top:291.3px;width:1.6px;height:18px;background:#cdcdcd;"></div>
<div class="a" style="left:560.9px;top:299.5px;width:6.4px;height:6.4px;border:1.2px solid #62aedb;border-radius:1.2px;background:#fff"></div>
<div class="t" style="left:572.90px;top:301.30px;font-size:4.6px;color:#3a3a3a;letter-spacing:0.4px;transform:scaleX(0.9110);transform-origin:0 0;-webkit-text-stroke-width:0.05px;-webkit-text-stroke-width:0.12px;">HUBS</div>
<div class="t" style="left:614.70px;top:301.30px;font-size:4.6px;color:#3a3a3a;letter-spacing:0.4px;transform:scaleX(0.9516);transform-origin:0 0;-webkit-text-stroke-width:0.05px;-webkit-text-stroke-width:0.12px;">HA STATUS</div>
<div class="t" style="left:656.80px;top:295.20px;font-size:4.6px;color:#3a3a3a;letter-spacing:0.4px;transform:scaleX(0.9403);transform-origin:0 0;-webkit-text-stroke-width:0.05px;-webkit-text-stroke-width:0.12px;">HUB FAILOVER</div>
<div class="t" style="left:656.80px;top:301.30px;font-size:4.6px;color:#3a3a3a;letter-spacing:0.4px;transform:scaleX(0.9629);transform-origin:0 0;-webkit-text-stroke-width:0.05px;-webkit-text-stroke-width:0.12px;">PRIORITY</div>
<div class="t" style="left:699.00px;top:295.20px;font-size:4.6px;color:#3a3a3a;letter-spacing:0.4px;transform:scaleX(0.9773);transform-origin:0 0;-webkit-text-stroke-width:0.05px;-webkit-text-stroke-width:0.12px;">ALLOW DIA</div>
<div class="t" style="left:699.00px;top:301.30px;font-size:4.6px;color:#3a3a3a;letter-spacing:0.4px;transform:scaleX(0.9382);transform-origin:0 0;-webkit-text-stroke-width:0.05px;-webkit-text-stroke-width:0.12px;">VPN</div>
<div class="a" style="left:558px;top:309.3px;width:182.3px;height:13.6px;background:#dde9f2;border-top:1px solid #8ab8dc;border-bottom:1px solid #8ab8dc"></div>
<div class="a" style="left:570.2px;top:310.3px;width:1px;height:11.6px;background:#cfdce6;"></div>
<div class="a" style="left:612px;top:310.3px;width:1px;height:11.6px;background:#cfdce6;"></div>
<div class="a" style="left:654px;top:310.3px;width:1px;height:11.6px;background:#cfdce6;"></div>
<div class="a" style="left:696.3px;top:310.3px;width:1px;height:11.6px;background:#cfdce6;"></div>
<div class="a" style="left:560.9px;top:311.6px;width:6.4px;height:6.2px;border-radius:1px;background:#1a62a0"></div>
<svg class="a" style="left:560.9px;top:311.6px;" width="7" height="7" viewBox="0 0 7 7"><path d="M1.4 3.3 L2.7 4.6 L5 1.8" stroke="#fff" stroke-width="0.8" fill="none"/></svg>
<div class="t" style="left:572.50px;top:312.81px;font-size:5.3px;color:#3a3a3a;transform:scaleX(1.0001);transform-origin:0 0;-webkit-text-stroke-width:0.05px;">uk3hub-gcp</div>
<div class="t" style="left:657.50px;top:312.81px;font-size:5.3px;color:#3a3a3a;-webkit-text-stroke-width:0.05px;">1</div>
<svg class="a" style="left:696.5px;top:309.5px;" width="4" height="4" viewBox="0 0 4 4"><path d="M0 0 H3.2 L0 3.2 Z" fill="#c0392b"/></svg>
<div class="a" style="left:700px;top:313.2px;width:6.4px;height:6.2px;border-radius:1px;background:#2b93e0"></div>
<svg class="a" style="left:700px;top:313.2px;" width="7" height="7" viewBox="0 0 7 7"><path d="M1.4 3.3 L2.7 4.6 L5 1.8" stroke="#fff" stroke-width="0.8" fill="none"/></svg>
<div class="a" style="left:374.1px;top:360.3px;width:182.10000000000002px;height:12.1px;background:#f2f2f2;border-top:1px solid #dcdcdc"></div>
<div class="a" style="left:558px;top:360.3px;width:182.29999999999995px;height:12.1px;background:#f2f2f2;border-top:1px solid #dcdcdc"></div>
<svg class="a" style="left:376.3px;top:363.5px;" width="8" height="8" viewBox="0 0 8 8"><circle cx="3.6" cy="3.6" r="3" stroke="#3a7fb0" stroke-width="0.8" fill="none"/><path d="M2.1 3.6 H5.1 M3.6 2.1 V5.1" stroke="#3a7fb0" stroke-width="0.8"/></svg>
<div class="t" style="left:385.30px;top:364.81px;font-size:5.3px;color:#444;transform:scaleX(1.0922);transform-origin:0 0;-webkit-text-stroke-width:0.05px;">Add</div>
<svg class="a" style="left:401.2px;top:363.5px;" width="8" height="8" viewBox="0 0 8 8"><circle cx="3.6" cy="3.6" r="3" stroke="#e2a8a8" stroke-width="0.8" fill="none"/><path d="M2 3.6 H5.2" stroke="#e2a8a8" stroke-width="0.8"/></svg>
<div class="t" style="left:410.60px;top:364.81px;font-size:5.3px;color:#bbb;transform:scaleX(1.0378);transform-origin:0 0;-webkit-text-stroke-width:0.05px;">Delete</div>
<div class="a" style="left:431.6px;top:363.8px;width:6.6px;height:6.6px;border:1px solid #777;border-radius:1px;background:#fff"></div>
<div class="t" style="left:440.20px;top:364.81px;font-size:5.3px;color:#444;transform:scaleX(1.0313);transform-origin:0 0;-webkit-text-stroke-width:0.05px;">Group HA Peers</div>
<svg class="a" style="left:560px;top:363.5px;" width="8" height="8" viewBox="0 0 8 8"><circle cx="3.6" cy="3.6" r="3" stroke="#3a7fb0" stroke-width="0.8" fill="none"/><path d="M2.1 3.6 H5.1 M3.6 2.1 V5.1" stroke="#3a7fb0" stroke-width="0.8"/></svg>
<div class="t" style="left:569.70px;top:364.81px;font-size:5.3px;color:#444;transform:scaleX(1.0498);transform-origin:0 0;-webkit-text-stroke-width:0.05px;">Add</div>
<svg class="a" style="left:585.3px;top:363.5px;" width="8" height="8" viewBox="0 0 8 8"><circle cx="3.6" cy="3.6" r="3" stroke="#d9534f" stroke-width="0.8" fill="none"/><path d="M2 3.6 H5.2" stroke="#d9534f" stroke-width="0.8"/></svg>
<div class="t" style="left:594.40px;top:364.81px;font-size:5.3px;color:#444;transform:scaleX(1.0835);transform-origin:0 0;-webkit-text-stroke-width:0.05px;">Delete</div>
<div class="a" style="left:615.6px;top:363.8px;width:6.6px;height:6.6px;border:1px solid #777;border-radius:1px;background:#fff"></div>
<div class="t" style="left:624.00px;top:364.81px;font-size:5.3px;color:#444;transform:scaleX(1.0443);transform-origin:0 0;-webkit-text-stroke-width:0.05px;">Group HA Peers</div>
<div class="a" style="left:373.6px;top:279.1px;width:183.1px;height:94.3px;border:1px solid #d3d3d3"></div>
<div class="a" style="left:557.5px;top:279.1px;width:183.3px;height:94.3px;border:1px solid #d3d3d3"></div>
<div class="a" style="left:376.5px;top:392px;width:48.19999999999999px;height:13.3px;border:1px solid #d3d3d3;border-radius:7px;background:#fff"></div>
<div class="t" style="left:382.10px;top:396.11px;font-size:5.3px;color:#3a3a3a;transform:scaleX(0.9444);transform-origin:0 0;-webkit-text-stroke-width:0.05px;-webkit-text-stroke-width:0;">Refresh IKE Key</div>
<div class="a" style="left:428.4px;top:392px;width:78.70000000000005px;height:13.3px;border:1px solid #d3d3d3;border-radius:7px;background:#fff"></div>
<div class="t" style="left:434.25px;top:396.11px;font-size:5.3px;color:#3a3a3a;transform:scaleX(0.9679);transform-origin:0 0;-webkit-text-stroke-width:0.05px;-webkit-text-stroke-width:0;">Remove DDNS Configuration</div>
<div class="a" style="left:669px;top:392px;width:35.60000000000002px;height:13.3px;border:1px solid #1c3550;border-radius:7px;background:#1b9ae5"></div>
<div class="t" style="left:682.80px;top:396.11px;font-size:5.3px;color:#fff;font-weight:bold;transform:scaleX(1.0063);transform-origin:0 0;-webkit-text-stroke-width:0.05px;">OK</div>
<div class="a" style="left:707.8px;top:392px;width:34.90000000000009px;height:13.3px;border:1px solid #d3d3d3;border-radius:7px;background:#fff"></div>
<div class="t" style="left:717.25px;top:396.11px;font-size:5.3px;color:#3a3a3a;transform:scaleX(0.9698);transform-origin:0 0;-webkit-text-stroke-width:0.05px;-webkit-text-stroke-width:0;">Cancel</div>
</div>
</body></html>
